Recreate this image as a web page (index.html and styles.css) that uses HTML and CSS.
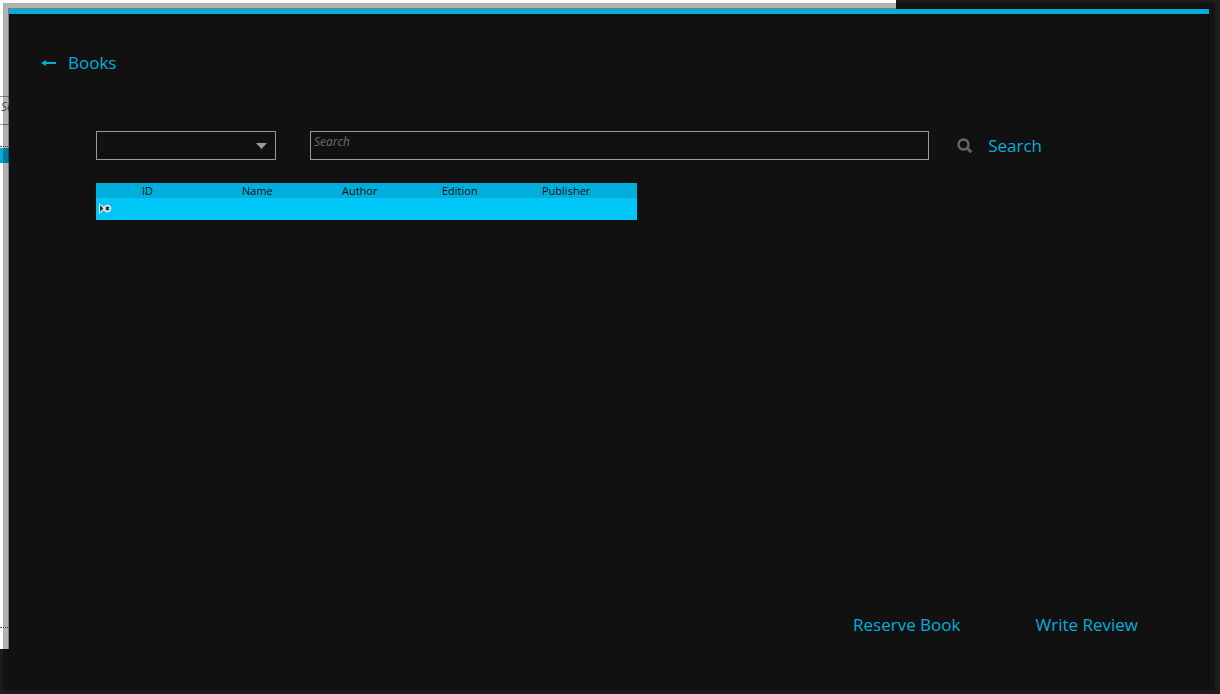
FILE: index.html
```
<!DOCTYPE html>
<html lang="en">
<head>
<meta charset="utf-8">
<title>Books</title>
<link rel="stylesheet" href="styles.css">
</head>
<body>
<div class="backdrop" aria-hidden="true">
  <div class="back-field">Se</div>
  <div class="back-grid"><div class="back-grid-head"></div></div>
</div>
<div class="shadow">
  <main class="window">
    <header class="title-row">
      <button class="back" type="button" aria-label="Back">
        <svg width="16" height="8" viewBox="0 0 16 8"><path d="M0 4L5 1V3H15V5H5V7Z"/></svg>
      </button>
      <h1 class="title">Books</h1>
    </header>
    <form class="search-row">
      <div class="select-box">
        <select class="select" aria-label="Search by"><option></option></select>
        <svg class="caret" width="11" height="6" viewBox="0 0 11 6"><path d="M0 0H11L5.500 6Z"/></svg>
      </div>
      <input class="query" type="text" placeholder="Search" aria-label="Search text">
      <button class="link search" type="button">
        <svg class="lens" width="16" height="16" viewBox="0 0 16 16"><circle cx="6.500" cy="6.500" r="5"/><path d="M10.300 10.300L14.300 14.300"/></svg>
        <span>Search</span>
      </button>
    </form>
    <table class="grid">
      <thead>
        <tr><th class="marker"></th><th>ID</th><th>Name</th><th>Author</th><th>Edition</th><th>Publisher</th></tr>
      </thead>
      <tbody>
        <tr>
          <td class="marker"><svg class="new-row" width="13" height="11" viewBox="0 0 13 11"><path class="halo" d="M0 0L5 4A3.800 3.800 0 1 1 5 7L0 11Z"/><path class="ink" d="M1 2L4.500 5.500L1 9Z"/><path class="star" d="M8.500 3.300V7.700M6.600 4.400L10.400 6.600M10.400 4.400L6.600 6.600"/></svg></td>
          <td></td><td></td><td></td><td></td><td></td>
        </tr>
      </tbody>
    </table>
    <footer class="actions">
      <button class="link" type="button">Reserve Book</button>
      <button class="link" type="button">Write Review</button>
    </footer>
  </main>
</div>
</body>
</html>
```
FILE: styles.css
```
* { box-sizing: border-box; }
body {
  margin: 0;
  background: #1c1c1c;
  font-family: "Open Sans", "Noto Sans", sans-serif;
}
button { padding: 0; border: 0; background: none; font: inherit; cursor: pointer; }
svg { display: block; }

/* the form that lies partly hidden behind the window */
.backdrop {
  position: absolute;
  top: 0;
  left: 0;
  width: 896px;
  height: 649px;
  padding-top: 96px;
  background: #fff;
  overflow: hidden;
}
.back-field {
  height: 29px;
  margin-bottom: 21px;
  border: solid #999;
  border-width: 1px 0;
  padding: 2px 1px;
  color: #666;
  font-size: 12px;
  line-height: 16px;
  font-style: italic;
}
.back-grid { height: 482px; border: dotted #555; border-width: 1px 0; }
.back-grid-head { height: 15px; margin-top: 1px; background: #00aedb; }

.shadow {
  position: relative;
  min-height: 100vh;
  padding: 3px 5px 4px 3px;
}
.shadow::before {
  content: "";
  position: absolute;
  inset: 3px 5px 4px 3px;
  border: 1px solid rgba(0, 0, 0, 0.04);
  background: rgba(0, 0, 0, 0.3);
}
.window {
  position: relative;
  display: flex;
  flex-direction: column;
  min-height: calc(100vh - 18px);
  margin: 6px 6px 5px;
  border-top: 5px solid #00aedb;
  padding: 35px 71px 47px 32px;
  background: #111;
  box-shadow: 0 0 0 1px rgba(0, 0, 0, 0.3);
}
.title-row { display: flex; align-items: center; gap: 11px; height: 27px; }
.back { fill: #00aedb; }
.title { margin: 0; color: #00aedb; font-size: 17px; font-weight: 400; line-height: 26px; }

.search-row {
  display: flex;
  align-items: center;
  margin: 55px 96px 23px 55px;
}
.select-box { position: relative; flex: none; width: 180px; margin-right: 34px; }
.select {
  display: block;
  width: 100%;
  height: 29px;
  border: 1px solid #999;
  border-radius: 0;
  background: #111;
  color: #999;
  appearance: none;
}
.caret { position: absolute; top: 12px; right: 9px; fill: #999; pointer-events: none; }
.query {
  flex: 1;
  min-width: 0;
  height: 29px;
  border: 1px solid #999;
  padding: 0 3px 8px;
  background: #111;
  color: #ccc;
  font: italic 12px "Open Sans", "Noto Sans", sans-serif;
}
.query::placeholder { color: #6d6d6d; opacity: 1; }
.link { color: #00aedb; font-size: 17px; line-height: 26px; }
.search { display: flex; align-items: center; gap: 15px; margin-left: 28px; }
.lens { fill: none; stroke: #666; stroke-width: 2.400; }
.lens path { stroke-width: 3; }

.grid {
  width: 541px;
  margin-left: 55px;
  border-collapse: collapse;
  table-layout: fixed;
  font-size: 11px;
}
.grid th, .grid td { height: 22px; padding: 0; background: #00c6f7; }
.grid th {
  height: 15px;
  padding-left: 5px;
  background: #00aedb;
  color: #111;
  font-weight: 400;
  line-height: 15px;
  text-align: left;
}
.grid .marker { width: 41px; }
.grid td.marker { padding-bottom: 2px; }
.new-row { margin-left: 3px; }
.halo { fill: #e8f4f8; }
.ink { fill: #333; }
.star { fill: none; stroke: #333; stroke-width: 1.300; }

.actions { display: flex; justify-content: flex-end; gap: 75px; margin-top: auto; }
```
